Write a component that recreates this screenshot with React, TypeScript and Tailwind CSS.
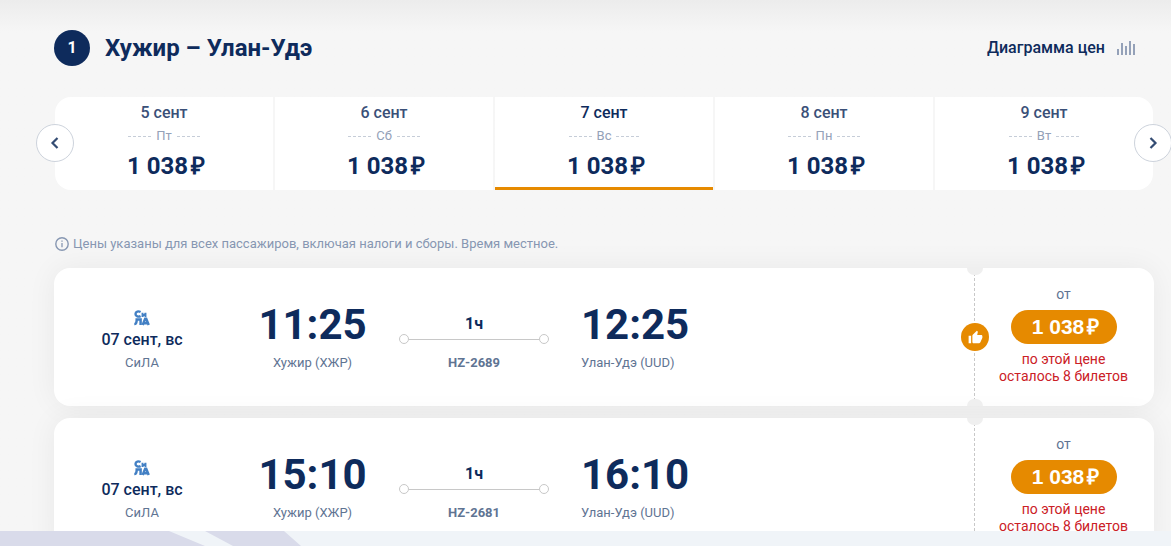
import React from 'react';
import { clsx } from 'clsx';

interface DayPrice {
  date: string;
  weekday: string;
  price: string;
  active?: boolean;
}

interface Flight {
  depart: string;
  arrive: string;
  number: string;
  recommended?: boolean;
}

const days: DayPrice[] = [
  { date: '5 сент', weekday: 'Пт', price: '1 038' },
  { date: '6 сент', weekday: 'Сб', price: '1 038' },
  { date: '7 сент', weekday: 'Вс', price: '1 038', active: true },
  { date: '8 сент', weekday: 'Пн', price: '1 038' },
  { date: '9 сент', weekday: 'Вт', price: '1 038' },
];

const flights: Flight[] = [
  { depart: '11:25', arrive: '12:25', number: 'HZ-2689', recommended: true },
  { depart: '15:10', arrive: '16:10', number: 'HZ-2681' },
];

const ChartIcon = () => (
  <svg className="w-[18px] h-[14px]" viewBox="0 0 18 14" fill="#94a1b8" shapeRendering="crispEdges" aria-hidden="true">
    <rect x="0" y="8" width="2" height="6" />
    <rect x="4" y="2" width="2" height="12" />
    <rect x="8" y="5" width="2" height="9" />
    <rect x="12" y="0" width="2" height="14" />
    <rect x="16" y="3" width="2" height="11" />
  </svg>
);

const InfoIcon = () => (
  <svg className="w-[14px] h-[14px]" viewBox="0 0 14 14" fill="none" stroke="#8797b2" aria-hidden="true">
    <circle cx="7" cy="7" r="6.2" strokeWidth="1.4" />
    <path d="M7 6v4.2M7 3.6v1.2" strokeWidth="1.3" />
  </svg>
);

const ThumbIcon = () => (
  <svg className="w-[15px] h-[15px]" viewBox="0 0 24 24" fill="#fff" aria-hidden="true">
    <path d="M1 21h4V9H1v12zm22-11c0-1.1-.9-2-2-2h-6.31l.95-4.57.03-.32c0-.41-.17-.79-.44-1.06L14.17 1 7.59 7.59C7.22 7.95 7 8.45 7 9v10c0 1.1.9 2 2 2h9c.83 0 1.54-.5 1.84-1.22l3.02-7.05c.09-.23.14-.47.14-.73v-2z" />
  </svg>
);

// Логотип СиЛА
const AirlineLogo = () => (
  <svg className="w-4 h-4" viewBox="0 0 16 16" fill="none" stroke="#4380c4" aria-hidden="true">
    <path d="M6.600 2C4.500.9 1.500 1.300 1.500 4s3 3.200 5.100 2.100" strokeWidth="2.400" />
    <path d="M8.500 2.800V7M11.500 2.800V7M8.500 6.200l3-2.600" strokeWidth="1.900" />
    <path d="M.3 14C2 14 2.700 13 2.700 9.400h3.900V15" strokeWidth="2.500" />
    <path d="M8.700 15l2.500-6.200h1l2.500 6.200M9.600 13.200h4.200" strokeWidth="2.500" />
  </svg>
);

const ArrowButton = ({ side }: { side: 'left' | 'right' }) => (
  <button
    type="button"
    aria-label={side === 'left' ? 'Назад' : 'Вперёд'}
    className={clsx(
      'absolute top-[27px] flex items-center justify-center w-[38px] h-[38px] rounded-full bg-white border border-[#cdd3dc]',
      side === 'left' ? '-left-[19px]' : '-right-[19px]'
    )}
  >
    <svg className="w-3 h-3" viewBox="0 0 12 12" fill="none" stroke="#344c73" strokeWidth="2.2" aria-hidden="true">
      <path d={side === 'left' ? 'M8.500 1 3.500 6l5 5' : 'M3.500 1l5 5-5 5'} />
    </svg>
  </button>
);

const DayCell = ({ day }: { day: DayPrice }) => (
  <button
    type="button"
    className={clsx(
      'flex-1 flex flex-col items-center bg-white pt-1 h-[93px]',
      day.active && 'border-b-3 border-[#e68a00]'
    )}
  >
    <span className={clsx('text-base leading-6 font-medium', day.active ? 'text-[#0e2b5c]' : 'text-[#3a5078]')}>
      {day.date}
    </span>
    <span className="flex items-center gap-[5px] text-[13px] leading-[22px] text-[#94a1b8]">
      <DayDash />
      {day.weekday}
      <DayDash />
    </span>
    <span className="flex gap-[3px] pl-1 text-2xl leading-[38px] font-bold text-[#0e2b5c]">
      <span>{day.price}</span>
      <span className="font-['Liberation_Sans',sans-serif]">₽</span>
    </span>
  </button>
);

const DayDash = () => (
  <svg className="w-[23px] h-px" viewBox="0 0 23 1" aria-hidden="true">
    <path d="M0 .5h23" stroke="#c6cdd8" strokeDasharray="3 2" />
  </svg>
);

const FlightCard = ({ flight }: { flight: Flight }) => (
  <article className="flex h-[138px] rounded-2xl bg-white shadow-[0_0_30px_rgba(0,0,0,0.06)]">
    <div className="flex-1 grid grid-cols-[176px_169px_150px_1fr] text-[13px] leading-5 text-[#5f7493]">
      <div className="flex flex-col items-center pt-[42px]">
        <AirlineLogo />
        <span className="text-base leading-[27px] font-medium text-[#0e2b5c]">07 сент, вс</span>
        <span>СиЛА</span>
      </div>
      <div className="flex flex-col items-center pt-[33px] pr-1">
        <time className="text-[42px] leading-[48px] pb-1 font-bold text-[#0e2b5c]">{flight.depart}</time>
        <span>Хужир (ХЖР)</span>
      </div>
      <div className="flex flex-col items-center pt-[46px]">
        <span className="text-base leading-5 font-bold text-[#0e2b5c]">1ч</span>
        <div className="flex items-center w-full h-[10px]">
          <i className="w-[10px] h-[10px] rounded-full border border-[#c8c8c8]" />
          <i className="flex-1 h-px bg-[#c8c8c8]" />
          <i className="w-[10px] h-[10px] rounded-full border border-[#c8c8c8]" />
        </div>
        <span className="pt-[9px] font-bold">{flight.number}</span>
      </div>
      <div className="flex flex-col items-start pt-[33px] pl-8">
        <time className="text-[42px] leading-[48px] pb-1 font-bold text-[#0e2b5c]">{flight.arrive}</time>
        <span>Улан-Удэ (UUD)</span>
      </div>
    </div>

    {/* Отрывная часть с ценой */}
    <div className="relative flex flex-col items-center w-[180px] pt-[15px] pr-0.5 border-l border-dashed border-[#c8c8c8]">
      <i className="absolute top-0 -left-2 w-4 h-[7px] rounded-b-full bg-[#efefef]" />
      <i className="absolute bottom-0 -left-2 w-4 h-[7px] rounded-t-full bg-[#efefef]" />
      {flight.recommended && (
        <span className="absolute top-[55px] -left-[14px] flex items-center justify-center w-7 h-7 rounded-full bg-[#e68a00]">
          <ThumbIcon />
        </span>
      )}
      <span className="pb-[5px] text-sm leading-[22px] text-[#5f7493]">от</span>
      <button
        type="button"
        className="flex justify-center gap-[3px] w-[106px] h-[34px] pl-1 rounded-full bg-[#e68a00] font-['Liberation_Sans',sans-serif] text-[21px] leading-[34px] font-bold text-white"
      >
        <span>1 038</span>
        <span>₽</span>
      </button>
      <p className="pt-[7px] text-sm leading-[17px] text-center text-[#cb2026]">
        по этой цене
        <br />
        осталось 8 билетов
      </p>
    </div>
  </article>
);

const App: React.FC = () => {
  return (
    <div className="h-screen flex flex-col bg-[#f6f6f6] font-[Roboto,sans-serif] overflow-hidden">
      <main className="flex-1 min-h-0 overflow-hidden pl-[54px] pr-[17px] pt-[30px] bg-linear-to-b from-[#ececec] to-[#f6f6f6] to-[32px]">
        <header className="flex items-center justify-between h-9 pr-[19px]">
          <div className="flex items-center gap-[15px]">
            <span className="flex items-center justify-center w-9 h-9 rounded-full bg-[#0e2b5c] text-base font-bold text-white">1</span>
            <h1 className="text-2xl font-bold text-[#0e2b5c]">Хужир – Улан-Удэ</h1>
          </div>
          <button type="button" className="flex items-center gap-3 text-base font-medium text-[#0e2b5c]">
            Диаграмма цен
            <ChartIcon />
          </button>
        </header>

        <nav className="relative mt-[31px] mx-px" aria-label="Даты вылета">
          <div className="flex gap-0.5 rounded-2xl overflow-hidden">
            {days.map((day) => (
              <DayCell key={day.date} day={day} />
            ))}
          </div>
          <ArrowButton side="left" />
          <ArrowButton side="right" />
        </nav>

        <p className="flex items-center gap-1 mt-11 pl-px text-[13px] leading-5 text-[#8797b2]">
          <InfoIcon />
          Цены указаны для всех пассажиров, включая налоги и сборы. Время местное.
        </p>

        <section className="flex flex-col gap-3 mt-[14px]">
          {flights.map((flight) => (
            <FlightCard key={flight.number} flight={flight} />
          ))}
        </section>
      </main>

      <footer className="shrink-0 h-[15px] bg-[#f0f4f8]">
        <svg className="block w-[301px] h-[15px]" viewBox="0 0 301 15" fill="#d9dbea" aria-hidden="true">
          <path d="M0 0h169l36 15H0zM205 0h79l17 15h-68z" />
        </svg>
      </footer>
    </div>
  );
};

export default App;
